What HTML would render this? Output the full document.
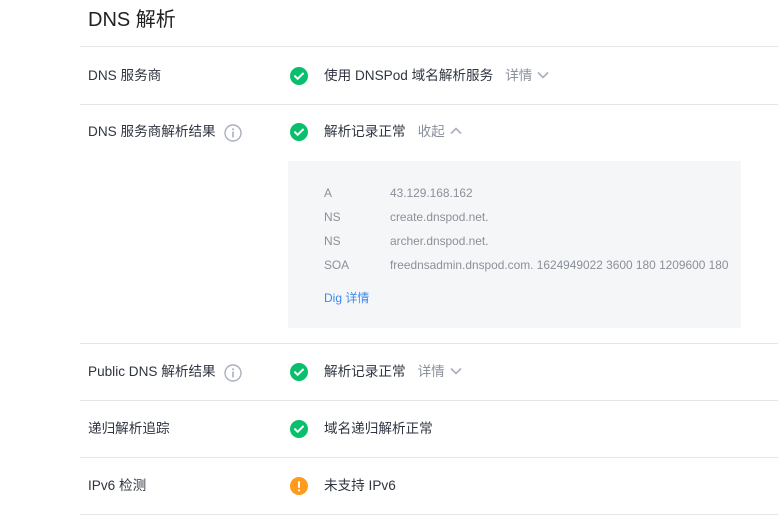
<!DOCTYPE html>
<html><head><meta charset="utf-8"><style>
body{margin:0;width:778px;height:523px;background:#fff;position:relative;overflow:hidden;font-family:"Liberation Sans","Noto Sans CJK SC",sans-serif;color:#333;}
.a{position:absolute;white-space:nowrap;line-height:1;}
.hr{position:absolute;left:80px;right:0;height:1px;background:#e5e5e5;}
.lb{font-size:13.6px;color:#2f3440;}
.g{color:#8a909b;margin-left:12px;}
.r{font-size:11.9px;color:#8a8f99;}
svg{position:absolute;}
.ch{position:relative;display:inline-block;vertical-align:middle;margin-left:4px;top:-1px}
</style></head><body>
<div class="a" style="left:88px;top:10px;font-size:20px;color:#222;">DNS 解析</div>
<div class="hr" style="top:46px"></div>
<div class="hr" style="top:104px"></div>
<div class="hr" style="top:343px"></div>
<div class="hr" style="top:400px"></div>
<div class="hr" style="top:457px"></div>
<div class="hr" style="top:514px"></div>

<div class="a lb" style="left:88px;top:69px">DNS 服务商</div>
<div class="a lb" style="left:88px;top:125px">DNS 服务商解析结果</div>
<div class="a lb" style="left:88px;top:365px">Public DNS 解析结果</div>
<div class="a lb" style="left:88px;top:422px">递归解析追踪</div>
<div class="a lb" style="left:88px;top:479px">IPv6 检测</div>

<svg style="left:224px;top:124px" width="18" height="18" viewBox="0 0 18 18"><circle cx="9" cy="9" r="8" fill="none" stroke="#a9b0bd" stroke-width="1.4"/><circle cx="9" cy="5.3" r="1" fill="#a9b0bd"/><rect x="8.2" y="7.5" width="1.6" height="6" fill="#a9b0bd"/></svg>
<svg style="left:224px;top:364px" width="18" height="18" viewBox="0 0 18 18"><circle cx="9" cy="9" r="8" fill="none" stroke="#a9b0bd" stroke-width="1.4"/><circle cx="9" cy="5.3" r="1" fill="#a9b0bd"/><rect x="8.2" y="7.5" width="1.6" height="6" fill="#a9b0bd"/></svg>

<svg style="left:290px;top:67px" width="18" height="18" viewBox="0 0 18 18"><circle cx="9" cy="9" r="9" fill="#0abf6b"/><path d="M5 9.2l2.7 2.6L13 6.5" fill="none" stroke="#fff" stroke-width="2" stroke-linecap="round" stroke-linejoin="round"/></svg>
<svg style="left:290px;top:123px" width="18" height="18" viewBox="0 0 18 18"><circle cx="9" cy="9" r="9" fill="#0abf6b"/><path d="M5 9.2l2.7 2.6L13 6.5" fill="none" stroke="#fff" stroke-width="2" stroke-linecap="round" stroke-linejoin="round"/></svg>
<svg style="left:290px;top:363px" width="18" height="18" viewBox="0 0 18 18"><circle cx="9" cy="9" r="9" fill="#0abf6b"/><path d="M5 9.2l2.7 2.6L13 6.5" fill="none" stroke="#fff" stroke-width="2" stroke-linecap="round" stroke-linejoin="round"/></svg>
<svg style="left:290px;top:420px" width="18" height="18" viewBox="0 0 18 18"><circle cx="9" cy="9" r="9" fill="#0abf6b"/><path d="M5 9.2l2.7 2.6L13 6.5" fill="none" stroke="#fff" stroke-width="2" stroke-linecap="round" stroke-linejoin="round"/></svg>
<svg style="left:290px;top:477px" width="18" height="18" viewBox="0 0 18 18"><circle cx="9" cy="9" r="9" fill="#ff9a1a"/><rect x="8" y="4" width="2" height="7" rx="1" fill="#fff"/><circle cx="9" cy="13.3" r="1.1" fill="#fff"/></svg>

<div class="a lb" style="left:324px;top:69px">使用 DNSPod 域名解析服务<span class="g">详情</span><svg class="ch" width="14" height="10" viewBox="0 0 14 10"><path d="M2 2.5l5 5 5-5" fill="none" stroke="#a9b0bd" stroke-width="1.6"/></svg></div>
<div class="a lb" style="left:324px;top:125px">解析记录正常<span class="g">收起</span><svg class="ch" width="14" height="10" viewBox="0 0 14 10"><path d="M2 7.5l5-5 5 5" fill="none" stroke="#a9b0bd" stroke-width="1.6"/></svg></div>
<div class="a lb" style="left:324px;top:365px">解析记录正常<span class="g">详情</span><svg class="ch" width="14" height="10" viewBox="0 0 14 10"><path d="M2 2.5l5 5 5-5" fill="none" stroke="#a9b0bd" stroke-width="1.6"/></svg></div>
<div class="a lb" style="left:324px;top:422px">域名递归解析正常</div>
<div class="a lb" style="left:324px;top:479px">未支持 IPv6</div>

<div style="position:absolute;left:288px;top:161px;width:453px;height:167px;background:#f5f6f8;"></div>
<div class="a r" style="left:324px;top:188px">A</div><div class="a r" style="left:390px;top:188px">43.129.168.162</div>
<div class="a r" style="left:324px;top:212px">NS</div><div class="a r" style="left:390px;top:212px">create.dnspod.net.</div>
<div class="a r" style="left:324px;top:236px">NS</div><div class="a r" style="left:390px;top:236px">archer.dnspod.net.</div>
<div class="a r" style="left:324px;top:260px">SOA</div><div class="a r" style="left:390px;top:260px">freednsadmin.dnspod.com. 1624949022 3600 180 1209600 180</div>
<div class="a" style="left:324px;top:292px;font-size:12px;color:#3d8bf2">Dig 详情</div>
</body></html>
